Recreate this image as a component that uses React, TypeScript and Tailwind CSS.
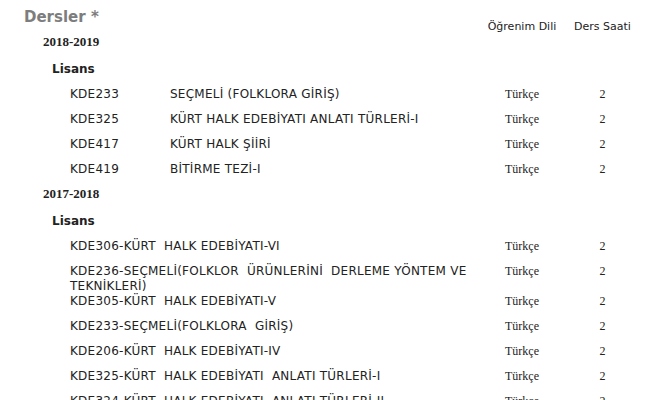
import * as React from "react";

const sans = "font-['DejaVu_Sans',Verdana,sans-serif]";
const serif = "font-['Liberation_Serif','Times_New_Roman',serif]";

type Course = { code?: string; name: string };

const years: { year: string; split: boolean; courses: Course[] }[] = [
  {
    year: "2018-2019",
    split: true,
    courses: [
      { code: "KDE233", name: "SEÇMELİ (FOLKLORA GİRİŞ)" },
      { code: "KDE325", name: "KÜRT HALK EDEBİYATI ANLATI TÜRLERİ-I" },
      { code: "KDE417", name: "KÜRT HALK ŞİİRİ" },
      { code: "KDE419", name: "BİTİRME TEZİ-I" },
    ],
  },
  {
    year: "2017-2018",
    split: false,
    courses: [
      { name: "KDE306-KÜRT\u00a0 HALK EDEBİYATI-VI" },
      { name: "KDE236-SEÇMELİ(FOLKLOR\u00a0 ÜRÜNLERİNİ\u00a0 DERLEME YÖNTEM VE TEKNİKLERİ)" },
      { name: "KDE305-KÜRT\u00a0 HALK EDEBİYATI-V" },
      { name: "KDE233-SEÇMELİ(FOLKLORA\u00a0 GİRİŞ)" },
      { name: "KDE206-KÜRT\u00a0 HALK EDEBİYATI-IV" },
      { name: "KDE325-KÜRT\u00a0 HALK EDEBİYATI\u00a0 ANLATI TÜRLERİ-I" },
      { name: "KDE324-KÜRT\u00a0 HALK EDEBİYATI\u00a0 ANLATI TÜRLERİ-II" },
    ],
  },
];

function CourseRow({ course, split }: { course: Course; split: boolean }) {
  return (
    <div className="grid grid-cols-[100px_312px_80px_81px] min-h-[25px] pl-[70px] box-content">
      {split ? (
        <>
          <div className="self-center leading-[15px] tracking-[0.25px]">{course.code}</div>
          <div className="self-center leading-[15px] tracking-[0.25px]">{course.name}</div>
        </>
      ) : (
        <div className="col-span-2 self-start pt-[5px] mb-[-4px] leading-[14.5px] tracking-[0.25px]">
          {course.name}
        </div>
      )}
      <div className={`${serif} text-[12px] self-start pt-[5px] leading-[15px] text-center`}>Türkçe</div>
      <div className={`${serif} text-[12px] self-start pt-[5px] leading-[15px] text-center`}>2</div>
    </div>
  );
}

export default function App() {
  return (
    <div className={`${sans} w-[652px] h-[400px] overflow-hidden bg-white text-[#222] text-[12px] pt-[8px]`}>
      {/* heading + column titles */}
      <div className="flex justify-between h-[26px]">
        <h2 className="pl-[24px] text-[15px] font-bold leading-[18px] text-[#7d7d7d]">Dersler *</h2>
        <div className="flex self-end text-[11px] leading-[14px] pr-[9px]">
          <span className="w-[80px] text-center">Öğrenim Dili</span>
          <span className="w-[81px] text-center">Ders Saati</span>
        </div>
      </div>

      {years.map((y, i) => (
        <div key={y.year}>
          <div className={`${serif} font-bold text-[13px] leading-[16px] pl-[43px] ${i === 0 ? "" : "mt-[4px]"}`}>
            {y.year}
          </div>
          <div className="font-bold leading-[16px] pl-[52px] mt-[11px] mb-[5px]">Lisans</div>
          {y.courses.map((c) => (
            <CourseRow key={c.name} course={c} split={y.split} />
          ))}
        </div>
      ))}
    </div>
  );
}
